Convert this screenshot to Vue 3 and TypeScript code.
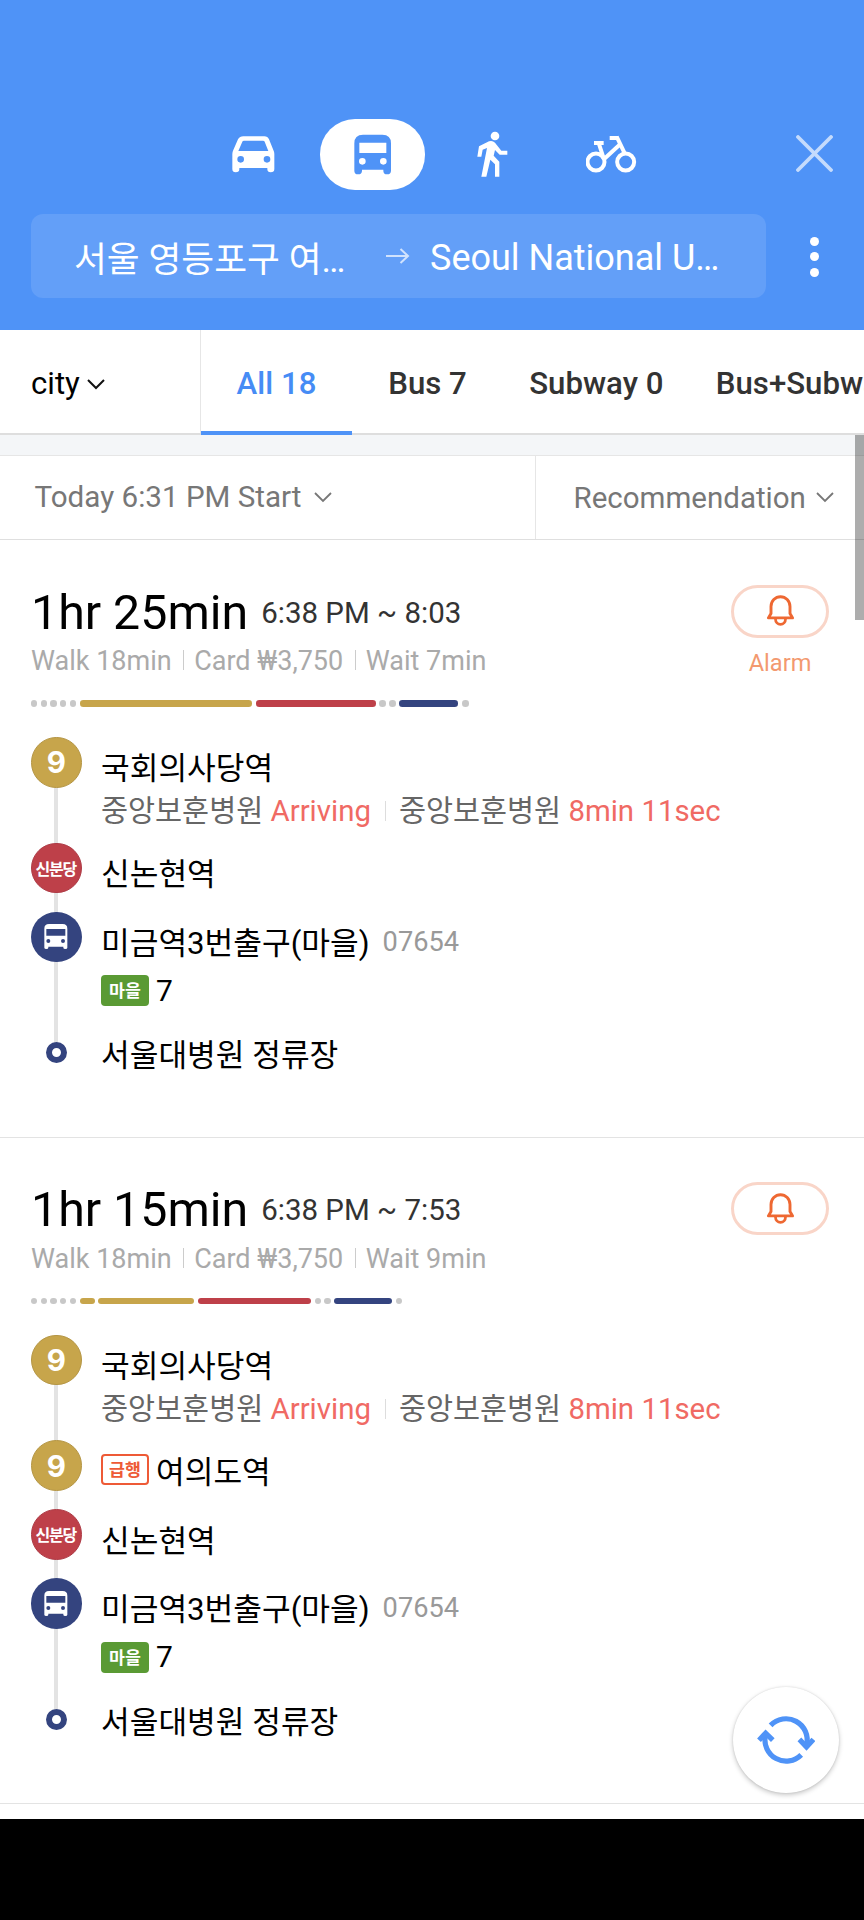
<script setup lang="ts">
type Kind = 'gold' | 'red' | 'bus' | 'end'

interface Stop {
  kind: Kind
  name: string
  express?: boolean
  code?: string
  arrivals?: { to: string; when: string }[]
  route?: string
}

interface Segment {
  color: 'walk' | 'gold' | 'red' | 'blue'
  width: number
}

interface Trip {
  duration: string
  time: string
  facts: string[]
  label?: string
  segments: Segment[]
  stops: Stop[]
}

const tabs = ['All 18', 'Bus 7', 'Subway 0', 'Bus+Subway']

const dots = (n: number): Segment[] => Array.from({ length: n }, () => ({ color: 'walk', width: 6.4 }))

const first: Stop = {
  kind: 'gold',
  name: '국회의사당역',
  arrivals: [
    { to: '중앙보훈병원', when: 'Arriving' },
    { to: '중앙보훈병원', when: '8min 11sec' },
  ],
}
const tail: Stop[] = [
  { kind: 'red', name: '신논현역' },
  { kind: 'bus', name: '미금역3번출구(마을)', code: '07654', route: '7' },
  { kind: 'end', name: '서울대병원 정류장' },
]

const trips: Trip[] = [
  {
    duration: '1hr 25min',
    time: '6:38 PM ~ 8:03',
    facts: ['Walk 18min', 'Card ₩3,750', 'Wait 7min'],
    label: 'Alarm',
    segments: [
      ...dots(5),
      { color: 'gold', width: 172.6 },
      { color: 'red', width: 119.4 },
      ...dots(2),
      { color: 'blue', width: 59 },
      ...dots(1),
    ],
    stops: [first, ...tail],
  },
  {
    duration: '1hr 15min',
    time: '6:38 PM ~ 7:53',
    facts: ['Walk 18min', 'Card ₩3,750', 'Wait 9min'],
    segments: [
      ...dots(5),
      { color: 'gold', width: 14.8 },
      { color: 'gold', width: 95.4 },
      { color: 'red', width: 113 },
      ...dots(2),
      { color: 'blue', width: 57.4 },
      ...dots(1),
    ],
    stops: [first, { kind: 'gold', name: '여의도역', express: true }, ...tail],
  },
]
</script>

<template>
  <div class="screen">
    <header class="header">
      <nav class="modes">
        <button class="mode">
          <svg width="43" height="37" viewBox="96 108 129 111">
            <path fill="#fff" fill-rule="evenodd" d="M130 109H193Q203 109 207 118L220 150Q223 156 223 162V207Q223 217 212 217Q202 217 202 207V204H118V207Q118 217 107 217Q97 217 97 207V162Q97 156 100 150L114 118Q119 109 130 109ZM132 122Q128 122 127 125L115 153H205L194 125Q193 122 189 122ZM122 168A10 10 0 1 0 122 188A10 10 0 1 0 122 168ZM201 168A10 10 0 1 0 201 188A10 10 0 1 0 201 168Z" />
          </svg>
        </button>
        <button class="mode active">
          <svg width="38" height="41" viewBox="461 103 114 123">
            <path fill="#4f93f7" fill-rule="evenodd" d="M488 105H546Q572 105 572 131V213Q572 224 560 224Q549 224 549 213V210H485V213Q485 224 473 224Q462 224 462 213V131Q462 105 488 105ZM477 129V160H558V129ZM486 175A10 10 0 1 0 486 195A10 10 0 1 0 486 175ZM549 175A10 10 0 1 0 549 195A10 10 0 1 0 549 175Z" />
          </svg>
        </button>
        <button class="mode">
          <svg width="31" height="46" viewBox="830 94 93 138">
            <circle cx="884" cy="109" r="13" fill="#fff" />
            <path fill="#fff" d="M866 125Q877 122 884 129L903 153H921V165H898L884 151L880 168L897 186V231H884V194L870 180L858 231H843L860 145L847 150L843 171H831L836 140Z" />
          </svg>
        </button>
        <button class="mode">
          <svg width="51" height="38" viewBox="1158 107 153 114">
            <g fill="none" stroke="#fff" stroke-width="12">
              <circle cx="1188" cy="188" r="25.5" />
              <circle cx="1277" cy="188" r="25.5" />
              <path d="M1182 131H1211M1196 131L1212 180M1229 116H1254M1250 112L1276 166M1210 181L1258 137" />
            </g>
          </svg>
        </button>
        <button class="close">
          <svg width="37" height="37" viewBox="0 0 37 37">
            <path d="M2 2L35 35M35 2L2 35" stroke="#c5dbfc" stroke-width="3.8" stroke-linecap="round" />
          </svg>
        </button>
      </nav>
      <div class="search-row">
        <div class="search">
          <span class="from">서울 영등포구 여…</span>
          <svg class="arrow" width="24" height="18" viewBox="0 0 24 18">
            <path d="M0 9H22M14.5 2L22 9L14.5 16" fill="none" stroke="#d0e2fd" stroke-width="2" />
          </svg>
          <span class="to">Seoul National U…</span>
        </div>
        <button class="more"><i /><i /><i /></button>
      </div>
    </header>

    <div class="tabs">
      <div class="scope">
        <span>city</span>
        <svg width="18" height="11" viewBox="0 0 18 11"><path d="M1 1L9 9L17 1" fill="none" stroke="#111" stroke-width="2" /></svg>
      </div>
      <div class="tab-list">
        <div v-for="(tab, i) in tabs" :key="tab" class="tab" :class="{ on: i === 0 }">{{ tab }}</div>
      </div>
    </div>

    <main class="content">
      <div class="scrollbar" />
      <div class="filters">
        <div class="filter when">
          <span>Today 6:31 PM Start</span>
          <svg width="18" height="11" viewBox="0 0 18 11"><path d="M1 1L9 9L17 1" fill="none" stroke="#777" stroke-width="1.8" /></svg>
        </div>
        <div class="filter sort">
          <span>Recommendation</span>
          <svg width="18" height="11" viewBox="0 0 18 11"><path d="M1 1L9 9L17 1" fill="none" stroke="#777" stroke-width="1.8" /></svg>
        </div>
      </div>

      <section v-for="trip in trips" :key="trip.duration" class="trip">
        <div class="top">
          <div class="summary">
            <div class="headline">
              <span class="duration">{{ trip.duration }}</span>
              <span class="time">{{ trip.time }}</span>
            </div>
            <div class="facts">
              <span v-for="fact in trip.facts" :key="fact">{{ fact }}</span>
            </div>
          </div>
          <div class="alarm">
            <button class="bell">
              <svg width="29" height="32" viewBox="0 0 29 32">
                <path d="M5 18.6V11.6A9.5 9.9 0 0 1 24 11.6V18.6L26.6 22.9H2.4Z" fill="none" stroke="#ee6832" stroke-width="2.9" stroke-linejoin="round" />
                <path d="M9.5 24A5 5.4 0 0 0 19.5 24" fill="none" stroke="#ee6832" stroke-width="2.8" />
              </svg>
            </button>
            <span v-if="trip.label">{{ trip.label }}</span>
          </div>
        </div>

        <div class="bar">
          <i v-for="(s, i) in trip.segments" :key="i" :class="s.color" :style="{ width: s.width + 'px' }" />
        </div>

        <ol class="stops">
          <li v-for="(stop, i) in trip.stops" :key="i" class="stop" :class="[stop.kind, { tall: stop.arrivals }]">
            <div class="rail">
              <div class="mark">
                <template v-if="stop.kind === 'gold'">9</template>
                <template v-else-if="stop.kind === 'red'">신분당</template>
                <svg v-else-if="stop.kind === 'bus'" width="24" height="25" viewBox="134 103 72 75">
                  <path fill="#fff" fill-rule="evenodd" d="M149 103H190Q204 103 204 117V174Q204 178 198 178Q192 178 192 174V171H147V174Q147 178 141 178Q135 178 135 174V117Q135 103 149 103ZM141 118V138H198V118ZM147 148A6 6 0 1 0 147 160A6 6 0 1 0 147 148ZM191 148A6 6 0 1 0 191 160A6 6 0 1 0 191 148Z" />
                </svg>
              </div>
            </div>
            <div class="info">
              <div class="name">
                <span v-if="stop.express" class="badge express">급행</span>
                <span>{{ stop.name }}</span>
                <span v-if="stop.code" class="code">{{ stop.code }}</span>
              </div>
              <div v-if="stop.arrivals" class="arrivals">
                <span v-for="a in stop.arrivals" :key="a.when" class="arrival">{{ a.to }} <em>{{ a.when }}</em></span>
              </div>
              <div v-if="stop.route" class="route">
                <span class="badge village">마을</span><span>{{ stop.route }}</span>
              </div>
            </div>
          </li>
        </ol>
      </section>

      <button class="refresh">
        <svg width="58" height="50" viewBox="0 0 58 50">
          <g fill="none" stroke="#4f93f7" stroke-width="5.2">
            <path d="M13.6 10.4A21.2 21.2 0 0 1 49.6 30" />
            <path d="M44.2 39.8A21.2 21.2 0 0 1 8.4 20.5" />
            <path d="M42.4 24.4L49.5 31.9L56.4 24.4" />
            <path d="M2 25.2L8.6 18.2L15.8 25.2" />
          </g>
        </svg>
      </button>
    </main>
    <footer class="system-bar" />
  </div>
</template>

<style>
body {
  margin: 0;
  background: #fff;
}
</style>

<style scoped>
.screen {
  display: flex;
  flex-direction: column;
  width: 864px;
  height: 1920px;
  overflow: hidden;
  background: #fff;
  color: #000;
  font-family: Roboto, "Noto Sans CJK KR", sans-serif;
}
button {
  margin: 0;
  padding: 0;
  border: 0;
  background: none;
}
svg {
  display: block;
  flex: none;
}
span {
  white-space: nowrap;
}

.header {
  box-sizing: border-box;
  flex: none;
  height: 329.5px;
  padding: 119px 31px 0;
  background: #4f93f7;
}
.modes {
  display: flex;
  align-items: center;
  gap: 14.3px;
  height: 70.5px;
  padding-left: 170px;
}
.mode {
  display: flex;
  align-items: center;
  justify-content: center;
  width: 105px;
  height: 70.5px;
  border-radius: 35px;
}
.mode.active {
  background: #fff;
}
.close {
  margin: 0 0 2px auto;
}
.search-row {
  display: flex;
  align-items: center;
  margin-top: 24.8px;
}
.search {
  display: flex;
  align-items: center;
  box-sizing: border-box;
  width: 734.5px;
  height: 84px;
  padding: 0 0 0 43px;
  border-radius: 12px;
  background: #639ff8;
  color: #fff;
  font-size: 36px;
  line-height: 80px;
}
.from {
  width: 312px;
  padding-top: 7px;
  font-size: 35.7px;
}
.to {
  padding: 3px 0 0 20px;
}
.more {
  display: flex;
  flex-direction: column;
  gap: 6.8px;
  margin: 1px 0 0 44.5px;
}
.more i {
  width: 9px;
  height: 9px;
  border-radius: 50%;
  background: #fff;
}

.tabs {
  display: flex;
  flex: none;
  box-sizing: border-box;
  height: 105.5px;
  border-bottom: 2px solid #dedede;
  font-size: 31.2px;
}
.scope {
  display: flex;
  align-items: center;
  box-sizing: border-box;
  width: 201px;
  padding: 6px 0 0 31px;
  gap: 7.5px;
  border-right: 1px solid #e6e6e6;
  line-height: 40px;
}
.tab-list {
  display: flex;
  flex: 1;
  overflow: hidden;
  margin-bottom: -2px;
}
.tab {
  box-sizing: border-box;
  flex: none;
  min-width: 151px;
  height: 105.5px;
  padding: 0 26.2px;
  color: #333;
  font-weight: 500;
  line-height: 108px;
  text-align: center;
  white-space: nowrap;
}
.tab.on {
  border-bottom: 4.5px solid #4f93f7;
  color: #468cf5;
}

.content {
  position: relative;
  flex: none;
  height: 1384px;
  overflow: hidden;
}
.scrollbar {
  position: absolute;
  top: -1px;
  right: 0;
  z-index: 2;
  width: 9px;
  height: 186px;
  background: rgba(0, 0, 0, 0.32);
}
.filters {
  display: flex;
  box-sizing: border-box;
  height: 105px;
  border-top: 20px solid #f4f6f8;
  border-bottom: 1px solid #dfdfdf;
  color: #777;
  font-size: 29.6px;
}
.filter {
  display: flex;
  align-items: center;
  box-sizing: border-box;
  border-top: 1px solid #e6e6e6;
  line-height: 80px;
}
.when {
  width: 536px;
  padding: 0 0 1px 34.5px;
  gap: 12.5px;
  border-right: 1px solid #e6e6e6;
}
.sort {
  flex: 1;
  padding-left: 37.5px;
  gap: 10px;
  font-size: 29.5px;
}

.trip {
  box-sizing: border-box;
  padding: 44px 0 0 31px;
  border-bottom: 1px solid #e3e3e3;
}
.top {
  display: flex;
  justify-content: space-between;
  height: 116px;
  padding-right: 35px;
}
.headline {
  display: flex;
  align-items: center;
  height: 56px;
  line-height: 56px;
  gap: 13px;
}
.duration {
  padding-top: 1px;
  font-size: 48.3px;
}
.time {
  padding-top: 1px;
  color: #333;
  font-size: 29.5px;
}
.facts {
  display: flex;
  align-items: center;
  margin-top: 2px;
  height: 38px;
  color: #aaa;
  font-size: 27px;
  line-height: 38px;
}
.facts span + span::before {
  content: "";
  display: inline-block;
  width: 1px;
  height: 20px;
  margin: 0 10px 0 11.5px;
  background: #ccc;
}
.alarm {
  display: flex;
  flex-direction: column;
  align-items: center;
  width: 98px;
  padding-top: 0.5px;
  color: #f3996f;
  font-size: 23.6px;
  line-height: 30px;
}
.bell {
  display: flex;
  align-items: center;
  justify-content: center;
  box-sizing: border-box;
  width: 98px;
  height: 53px;
  margin-bottom: 10.5px;
  border: 3px solid #f9d5c8;
  border-radius: 27px;
}
.bar {
  display: flex;
  gap: 3.25px;
  height: 6.6px;
}
.bar i {
  border-radius: 3.3px;
}
.bar i:not(.walk),
.bar i:not(.walk) + .walk {
  margin-left: 0.6px;
}
.bar .walk { background: #c8c8c8; }
.bar .gold { background: #c7a54b; }
.bar .red { background: #be4049; }
.bar .blue { background: #34447f; }

.stops {
  margin: 0;
  padding: 30.6px 0 0;
  list-style: none;
}
.stop {
  display: flex;
  height: 68.8px;
}
.stop.tall {
  height: 105.6px;
}
.stop.bus {
  height: 115.6px;
}
.stop.end {
  height: 109.5px;
}
.rail {
  display: flex;
  justify-content: center;
  align-items: flex-start;
  width: 50.5px;
  margin-right: 19.5px;
  background: linear-gradient(#e3e3e3, #e3e3e3) 23px top / 4px 100% no-repeat;
}
.end .rail {
  background-size: 4px 26px;
}
.mark {
  display: flex;
  align-items: center;
  justify-content: center;
  box-sizing: border-box;
  width: 50.5px;
  height: 50.5px;
  border-radius: 50%;
  color: #fff;
  font-weight: 700;
}
.gold .mark {
  border: 1px solid #b59645;
  background: #c7a54b;
  font-family: Inter, sans-serif;
  font-size: 29.5px;
}
.red .mark {
  border: 1px solid #ae3c47;
  background: #be4049;
  font-family: "Noto Sans CJK KR", sans-serif;
  font-size: 16px;
  letter-spacing: -1.2px;
  padding: 0 1px 1px 0;
}
.bus .mark {
  background: #34447f;
}
.end .mark {
  width: 21px;
  height: 21px;
  margin-top: 15px;
  border: 6px solid #34447f;
  background: #fff;
}
.name {
  display: flex;
  align-items: center;
  height: 40px;
  padding-top: 12.3px;
  font-size: 31.2px;
  line-height: 40px;
}
.end .name {
  padding-top: 9.3px;
}
.code {
  margin: 0 0 4px 13px;
  color: #999;
  font-size: 27.2px;
}
.arrivals {
  display: flex;
  height: 40px;
  margin-top: 2px;
  color: #666;
  font-size: 29.4px;
  line-height: 40px;
}
.arrival em {
  color: #f06a64;
  font-style: normal;
}
.arrival + .arrival::before {
  content: "";
  display: inline-block;
  width: 1px;
  height: 20px;
  margin: 0 13px 0 14px;
  background: #ddd;
}
.route {
  display: flex;
  align-items: center;
  margin-top: 7px;
  font-size: 30px;
  line-height: 40px;
}
.badge {
  box-sizing: border-box;
  width: 48px;
  height: 31px;
  margin-right: 7px;
  border-radius: 4px;
  font-family: "Noto Sans CJK KR", sans-serif;
  font-size: 17.3px;
  font-weight: 700;
  line-height: 30px;
  text-align: center;
}
.village {
  background: #5a9a34;
  color: #fff;
}
.express {
  margin-bottom: 6px;
  border: 2px solid #ee5a36;
  color: #ee5a36;
  line-height: 26px;
}
.refresh {
  position: absolute;
  right: 25px;
  bottom: 26px;
  display: flex;
  align-items: center;
  justify-content: center;
  box-sizing: border-box;
  width: 106px;
  height: 106px;
  border-radius: 50%;
  background: #fff;
  box-shadow: 0 2px 5px rgba(0, 0, 0, 0.22), 0 0 2px rgba(0, 0, 0, 0.12);
}
.system-bar {
  flex: 1;
  background: #000;
}
</style>
